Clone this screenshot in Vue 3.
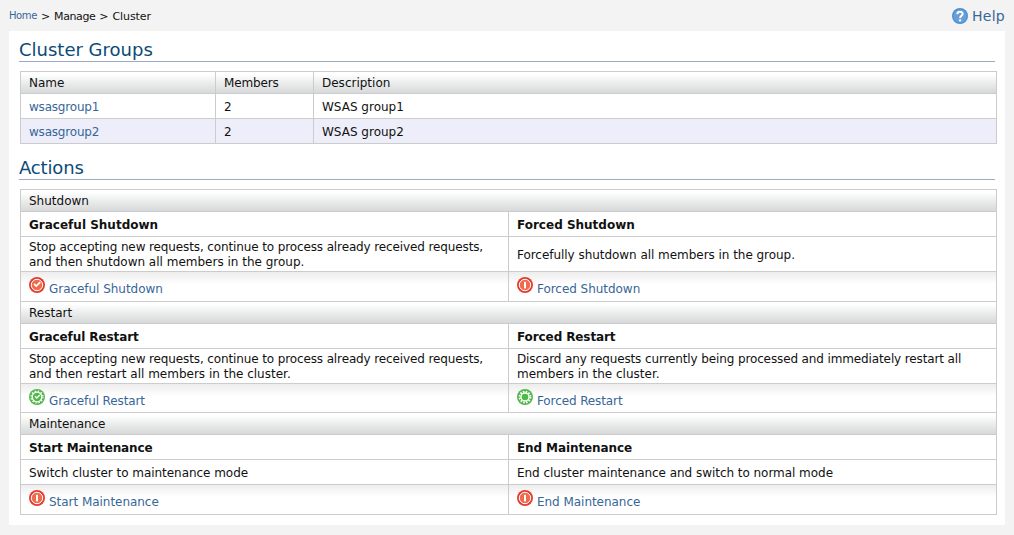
<script setup>
const groups = [
  { name: 'wsasgroup1', members: 2, description: 'WSAS group1' },
  { name: 'wsasgroup2', members: 2, description: 'WSAS group2' },
]
const sections = [
  {
    title: 'Shutdown', kind: 'double',
    items: [
      { name: 'Graceful Shutdown', icon: 'check', lines: ['Stop accepting new requests, continue to process already received requests,', 'and then shutdown all members in the group.'] },
      { name: 'Forced Shutdown', icon: 'power', lines: ['Forcefully shutdown all members in the group.'] },
    ],
  },
  {
    title: 'Restart', kind: 'double tight',
    items: [
      { name: 'Graceful Restart', icon: 'clock', lines: ['Stop accepting new requests, continue to process already received requests,', 'and then restart all members in the cluster.'] },
      { name: 'Forced Restart', icon: 'gear', lines: ['Discard any requests currently being processed and immediately restart all', 'members in the cluster.'] },
    ],
  },
  {
    title: 'Maintenance', kind: 'single',
    items: [
      { name: 'Start Maintenance', icon: 'power', lines: ['Switch cluster to maintenance mode'] },
      { name: 'End Maintenance', icon: 'power', lines: ['End cluster maintenance and switch to normal mode'] },
    ],
  },
]
</script>

<template>
  <div class="page">
    <header class="topbar">
      <nav class="crumbs"><a class="home">Home</a><span>&gt;</span><span class="manage">Manage</span><span>&gt;</span><span>Cluster</span></nav>
      <a class="help">
        <svg width="16" height="16" viewBox="0 0 16 16">
          <circle cx="8" cy="8" r="8" fill="#4a90d0" />
          <circle cx="8" cy="8" r="6.6" fill="#699fd6" />
          <path d="M5.3 6.1C5.4 2.8 10.8 2.9 10.6 6C10.5 7.8 8.1 8 8.1 10" fill="none" stroke="#fff" stroke-width="2" />
          <rect x="7" y="11.3" width="2.2" height="2.1" fill="#fff" />
        </svg>
        <span>Help</span>
      </a>
    </header>
    <main class="panel">
      <h2>Cluster Groups</h2>
      <div class="table groups">
        <div class="row head"><div>Name</div><div class="members">Members</div><div>Description</div></div>
        <div v-for="g in groups" :key="g.name" class="row">
          <div><a>{{ g.name }}</a></div><div>{{ g.members }}</div><div>{{ g.description }}</div>
        </div>
      </div>
      <h2 class="second">Actions</h2>
      <div class="table actions">
        <section v-for="s in sections" :key="s.title" :class="s.kind">
          <div class="head title">{{ s.title }}</div>
          <div class="pair names"><div v-for="i in s.items" :key="i.name">{{ i.name }}</div></div>
          <div class="pair desc">
            <div v-for="i in s.items" :key="i.name"><p v-for="l in i.lines" :key="l" :class="{ long: l.length > 60 }">{{ l }}</p></div>
          </div>
          <div class="pair links">
            <div v-for="i in s.items" :key="i.name">
              <svg class="icon" :class="{ green: i.icon === 'clock' || i.icon === 'gear' }" width="16" height="16" viewBox="0 0 16 16">
                <circle class="rim" cx="8" cy="8" r="8" />
                <template v-if="i.icon === 'check'">
                  <circle class="disc" cx="8" cy="8" r="5.7" />
                  <path d="M5.1 7L7.3 9.1L11.2 5.1" fill="none" stroke="#fff" stroke-width="1.8" />
                </template>
                <template v-else-if="i.icon === 'power'">
                  <circle class="disc" cx="8" cy="8" r="5.7" />
                  <rect x="7" y="4.8" width="2" height="6.6" fill="#fff" />
                </template>
                <template v-else-if="i.icon === 'clock'">
                  <circle cx="8" cy="8" r="4.8" fill="none" stroke="#fff" stroke-width="1.3" />
                  <circle cx="8" cy="8" r="6" fill="none" stroke="#fff" stroke-width="1.2" stroke-dasharray="1.5 1.642" />
                  <path d="M6 7.3L7.8 9L10.8 6" fill="none" stroke="#fff" stroke-width="1.4" />
                </template>
                <template v-else>
                  <circle cx="8" cy="8" r="5.4" fill="none" stroke="#fff" stroke-width="2" stroke-dasharray="1.6 1.228" />
                  <circle cx="8" cy="8" r="4" fill="none" stroke="#fff" stroke-width="1.4" />
                </template>
              </svg>
              <a>{{ i.name }}</a>
            </div>
          </div>
        </section>
      </div>
    </main>
  </div>
</template>

<style>
body { margin: 0; background: #f3f3f3; }
</style>
<style scoped>
.page { box-sizing: border-box; width: 1014px; height: 535px; padding: 0 9px; overflow: hidden; background: #f3f3f3; color: #111; font: 12px/15px "DejaVu Sans", sans-serif; }
.topbar { display: flex; justify-content: space-between; height: 31px; }
.crumbs { display: flex; gap: 4px; padding-top: 10px; font-size: 11px; line-height: 14px; letter-spacing: -0.1px; }
.home { margin-top: -1px; font-size: 10px; line-height: 13px; letter-spacing: -0.4px; }
.manage { letter-spacing: -0.4px; }
a { color: #386698; }
.help { display: flex; gap: 4px; padding-top: 8px; font-size: 14px; line-height: 16px; letter-spacing: 0.25px; }
.panel { box-sizing: border-box; height: 494px; padding: 5px 8px 0 10px; background: #fff; }
h2 { margin: 0 2px 9px 0; height: 25px; border-bottom: 1px solid #a0a8c8; color: #0b4b77; font-size: 18px; line-height: 27px; font-weight: normal; }
h2.second { margin-top: 10px; letter-spacing: -0.15px; }
.table { box-sizing: border-box; margin-left: 1px; border: solid #ccc; border-width: 1px 1px 0 1px; }
.head { background: linear-gradient(#fff 10%, #eceeee 50%, #d6d8d9); }
.row { display: grid; grid-template: 24px / 194px 98px 1fr; border-bottom: 1px solid #ccc; line-height: 26px; }
.row > div { padding-left: 8px; border-left: 1px solid #ccc; }
.row > div:first-child { border-left: 0; }
.row a { letter-spacing: -0.2px; }
.members { letter-spacing: -0.15px; }
.row.head { grid-template-rows: 21px; line-height: 22px; }
.row:last-child { background: #eeeefa; }
.title { height: 21px; padding-left: 8px; line-height: 22px; border-bottom: 1px solid #ccc; }
.single .title { letter-spacing: -0.08px; }
.pair { display: grid; grid-template: 100% / 487px 1fr; border-bottom: 1px solid #ccc; }
.pair > div { padding-left: 8px; }
.pair > div + div { border-left: 1px solid #ccc; }
.names { height: 24px; line-height: 26px; font-weight: bold; }
.tight .names, .single .names { letter-spacing: -0.1px; }
.desc { height: 34px; }
.desc > div { display: flex; flex-direction: column; justify-content: center; padding-top: 2px; white-space: nowrap; }
.single .desc { height: 24px; }
.desc p { margin: 0; }
.desc p.long { letter-spacing: -0.122px; }
.desc p:only-child { letter-spacing: -0.04px; }
.links { height: 29px; background: linear-gradient(#ededed, #fff 12px); }
.tight .links { height: 28px; }
.links > div { display: flex; gap: 4px; }
.links a { padding-top: 10px; letter-spacing: -0.04px; }
.tight .links a { letter-spacing: -0.11px; }
.icon { margin-top: 5px; flex: none; }
.rim { fill: #e83c31; }
.green .rim { fill: #50b848; }
.disc { fill: #ee6b4d; stroke: #fff; stroke-width: 1; }
</style>
